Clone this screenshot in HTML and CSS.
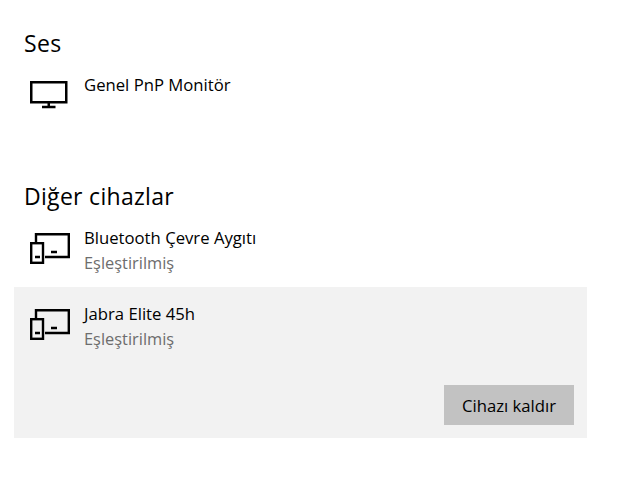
FILE: index.html
```html
<!DOCTYPE html>
<html lang="tr">
<head>
<meta charset="utf-8">
<title>Cihazlar</title>
<link rel="stylesheet" href="styles.css">
</head>
<body>
<main class="page">
  <section class="section section-audio">
    <h2 class="heading">Ses</h2>
    <div class="device device-single">
      <svg class="icon" width="40" height="31" viewBox="0 0 40 31" fill="none" stroke="#000" stroke-width="2.500">
        <rect x="1.250" y="1.250" width="35" height="20"/>
        <path d="M18.750 21v5M12 26h13.500"/>
      </svg>
      <div class="device-text"><div class="device-name">Genel PnP Monitör</div></div>
    </div>
  </section>
  <section class="section">
    <h2 class="heading heading-spaced">Diğer cihazlar</h2>
    <div class="device">
      <svg class="icon" width="40" height="31" viewBox="0 0 40 31" fill="none" stroke="#000" stroke-width="2.400">
        <path d="M6 9V1.200h32.800v22.800H15"/>
        <rect x="1.200" y="10.200" width="11.800" height="19.600"/>
        <path d="M5 24h5M21 19h6"/>
      </svg>
      <div class="device-text">
        <div class="device-name">Bluetooth Çevre Aygıtı</div>
        <div class="device-status">Eşleştirilmiş</div>
      </div>
    </div>
    <div class="device device-selected">
      <div class="device-main">
        <svg class="icon" width="40" height="31" viewBox="0 0 40 31" fill="none" stroke="#000" stroke-width="2.400">
          <path d="M6 9V1.200h32.800v22.800H15"/>
          <rect x="1.200" y="10.200" width="11.800" height="19.600"/>
          <path d="M5 24h5M21 19h6"/>
        </svg>
        <div class="device-text">
          <div class="device-name">Jabra Elite 45h</div>
          <div class="device-status">Eşleştirilmiş</div>
        </div>
      </div>
      <div class="actions"><button class="button" type="button">Cihazı kaldır</button></div>
    </div>
  </section>
</main>
</body>
</html>
```
FILE: styles.css
```css
* { box-sizing: border-box; }
html, body { margin: 0; background: #fff; }
body {
  width: 621px;
  height: 495px;
  overflow: hidden;
  font-family: "Open Sans", "Noto Sans", sans-serif;
  color: #000;
}
.page { padding: 29px 34px 0 14px; }
.section-audio { height: 153px; }
.heading {
  margin: 0 0 0 10px;
  font-size: 23px;
  line-height: 28px;
  font-weight: 400;
  letter-spacing: .3px;
}
.heading-spaced { margin-bottom: 14px; }
.device { display: flex; padding: 1px 0 0 16px; height: 63px; }
.device-single { padding-top: 15px; }
.device-single .icon { margin-top: 9px; }
.device-text { margin-left: 14px; }
.icon { flex: none; margin-top: 8px; }
.device-name { font-size: 16.7px; line-height: 25px; }
.device-status { font-size: 16.4px; line-height: 25px; color: #6d6d6d; }
.device-selected {
  display: block;
  height: 151px;
  padding-top: 14px;
  background: #f2f2f2;
}
.device-main { display: flex; }
.actions { display: flex; justify-content: flex-end; margin-top: 34px; padding-right: 13px; }
.button {
  width: 130px;
  height: 40px;
  border: 0;
  padding: 0;
  background: #c2c2c2;
  color: #000;
  font: inherit;
  font-size: 16.7px;
}
```
